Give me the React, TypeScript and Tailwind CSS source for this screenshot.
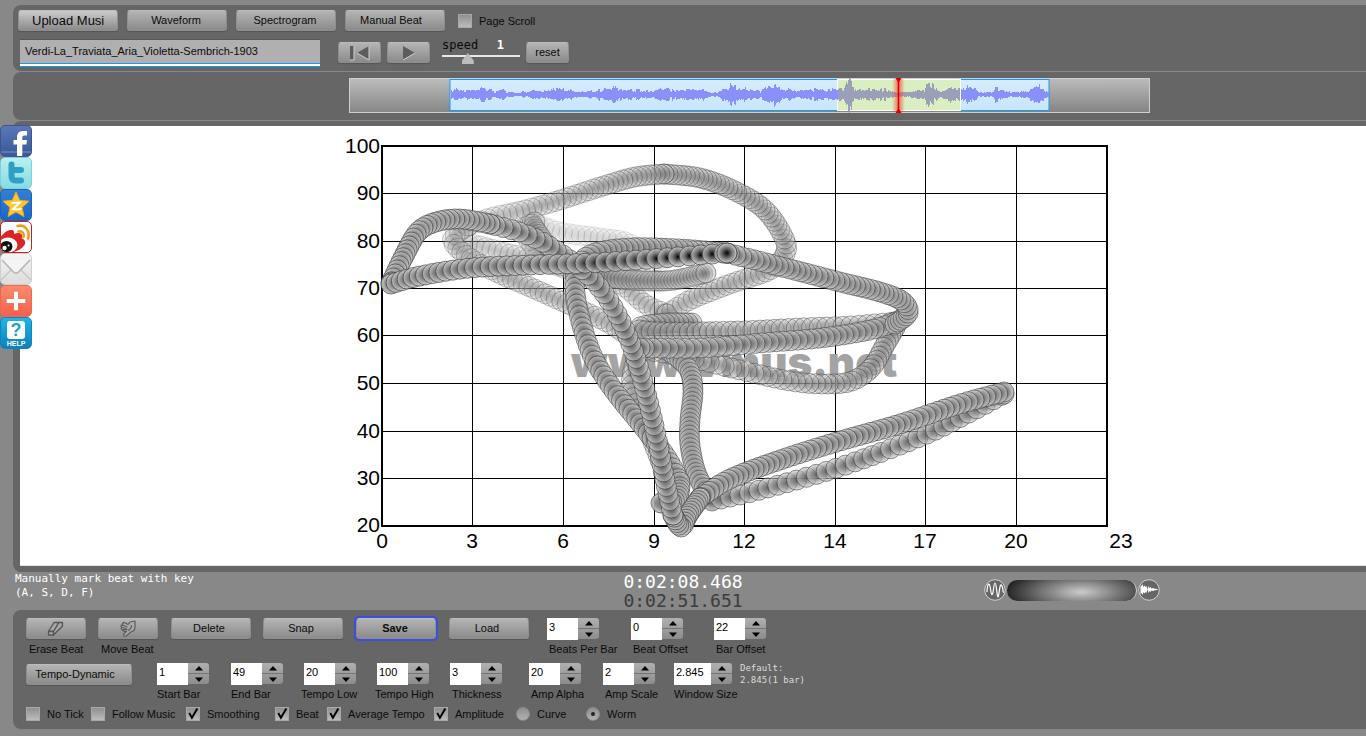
import React from "react";
import { Plus } from "lucide-react";

type Pt = [number, number];
type Strand = { pts: Pt[]; gap: [number, number]; alpha: [number, number]; tone: [number, number] };

/* Strands of the tempo-dynamic worm, oldest first, in chart units */
const strands: Strand[] = [
  { pts: [[532, 222], [560, 232], [600, 238], [628, 243], [660, 262]], gap: [6, 6], alpha: [0.2, 0.24], tone: [0, 0] },
  { pts: [[462, 242], [480, 246], [510, 254], [545, 262], [590, 277], [620, 284], [645, 304], [667, 314]], gap: [6, 6], alpha: [0.3, 0.5], tone: [0, 0] },
  { pts: [[667, 314], [690, 300], [730, 284], [770, 270], [785, 254], [784, 238], [765, 210], [735, 191], [700, 178], [664, 174]], gap: [6, 4], alpha: [0.5, 0.7], tone: [0, 0.3] },
  { pts: [[664, 174], [635, 177], [600, 187], [560, 200], [525, 210], [490, 218], [468, 226]], gap: [4, 7], alpha: [0.65, 0.36], tone: [0.3, 0] },
  { pts: [[468, 226], [455, 235], [454, 244], [470, 258], [500, 274], [530, 287], [570, 305], [610, 324], [640, 345]], gap: [5, 6], alpha: [0.45, 0.55], tone: [0.1, 0] },
  { pts: [[660, 281], [600, 272], [550, 262], [524, 232], [535, 222]], gap: [5, 5], alpha: [0.3, 0.4], tone: [0, 0.1] },
  { pts: [[532, 224], [540, 236], [555, 254], [580, 270], [610, 278], [665, 281], [706, 273]], gap: [3, 3], alpha: [0.5, 0.5], tone: [0.3, 0.3] },
  { pts: [[692, 323], [665, 323], [643, 326], [640, 330], [670, 332], [740, 331], [800, 328], [850, 326], [895, 322]], gap: [4, 8], alpha: [0.8, 0.7], tone: [0.2, 0] },
  { pts: [[895, 328], [885, 345], [872, 367], [852, 381], [825, 384], [790, 381], [740, 370], [690, 358], [640, 349]], gap: [4, 8], alpha: [0.8, 0.65], tone: [0.1, 0.15] },
  { pts: [[640, 349], [632, 375], [634, 398], [648, 430], [660, 460]], gap: [6, 6], alpha: [0.6, 0.7], tone: [0.1, 0.2] },
  { pts: [[670, 352], [688, 368], [693, 390], [690, 420], [690, 445], [697, 475], [712, 500]], gap: [4, 4], alpha: [0.8, 0.8], tone: [0, 0] },
  { pts: [[712, 501], [760, 490], [840, 467], [920, 437], [965, 415], [1004, 394]], gap: [9, 9], alpha: [0.85, 0.9], tone: [0.3, 0.4] },
  { pts: [[900, 320], [870, 330], [820, 338], [760, 343], [700, 348], [640, 348]], gap: [5, 8], alpha: [0.85, 0.85], tone: [0.2, 0.4] },
  { pts: [[895, 324], [908, 313], [902, 301], [880, 292], [840, 282], [790, 269], [727, 253]], gap: [3, 6], alpha: [0.85, 0.9], tone: [0, 0.4] },
  { pts: [[727, 253], [680, 249], [630, 248], [592, 254], [577, 270], [576, 300], [590, 350], [610, 385], [640, 423], [665, 455], [680, 482]], gap: [5, 6], alpha: [0.85, 0.9], tone: [0.1, 0.2] },
  { pts: [[680, 487], [676, 500], [661, 503]], gap: [3, 3], alpha: [0.8, 0.9], tone: [0, 0] },
  { pts: [[1004, 392], [960, 404], [900, 424], [840, 441], [780, 460], [730, 479], [700, 498]], gap: [6, 5], alpha: [0.95, 0.95], tone: [0.3, 0.2] },
  { pts: [[700, 498], [688, 515], [681, 527], [673, 515]], gap: [3, 3], alpha: [0.95, 0.95], tone: [0, 0] },
  { pts: [[673, 515], [665, 480], [655, 430], [641, 375], [625, 330], [600, 288], [567, 258], [530, 236], [490, 224]], gap: [7, 8], alpha: [0.95, 0.95], tone: [0.5, 0.7] },
  { pts: [[490, 224], [460, 219], [436, 222], [418, 232], [404, 256], [391, 283]], gap: [5, 4], alpha: [0.95, 0.95], tone: [0.3, 0] },
  { pts: [[391, 284], [420, 276], [470, 268], [530, 265], [590, 263], [650, 259], [700, 255], [727, 253]], gap: [5, 12], alpha: [1, 1], tone: [0.1, 1.2] },
];

const spline = (a: number, b: number, c: number, d: number, t: number) =>
  0.5 * (2 * b + (c - a) * t + (2 * a - 5 * b + 4 * c - d) * t * t + (3 * b - a - 3 * c + d) * t * t * t);

type Bead = { x: number; y: number; alpha: number; tone: number };

function beadsOf(s: Strand): Bead[] {
  const dense: Pt[] = [];
  for (let i = 0; i < s.pts.length - 1; i++) {
    const p0 = s.pts[Math.max(0, i - 1)];
    const p1 = s.pts[i];
    const p2 = s.pts[i + 1];
    const p3 = s.pts[Math.min(s.pts.length - 1, i + 2)];
    for (let k = 0; k < 60; k++) {
      const t = k / 60;
      dense.push([spline(p0[0], p1[0], p2[0], p3[0], t), spline(p0[1], p1[1], p2[1], p3[1], t)]);
    }
  }
  dense.push(s.pts[s.pts.length - 1]);
  const out: Bead[] = [];
  let run = 1000;
  dense.forEach((p, i) => {
    if (i > 0) run += Math.hypot(p[0] - dense[i - 1][0], p[1] - dense[i - 1][1]);
    const f = i / (dense.length - 1);
    const mix = (r: [number, number]) => r[0] + (r[1] - r[0]) * f;
    if (run >= mix(s.gap) || i === dense.length - 1) {
      run = 0;
      out.push({ x: p[0], y: p[1], alpha: mix(s.alpha), tone: Math.min(5, Math.round(mix(s.tone) * 5)) });
    }
  });
  return out;
}

const beads = strands.flatMap(beadsOf);
const cores = ["#787878", "#646464", "#505050", "#3c3c3c", "#222222", "#000000"];

function Chart() {
  const xs = [382, 472, 563, 654, 744, 835, 925, 1016, 1107];
  const xl = ["0", "3", "6", "9", "12", "14", "17", "20", "23"];
  const ys = [146, 193, 241, 288, 335, 383, 431, 478, 525];
  return (
    <svg width="800" height="439" viewBox="340 126 800 439" className="block" role="img" aria-label="Tempo-dynamic worm">
      <defs>
        {cores.map((c, i) => (
          <radialGradient key={c} id={"bead" + i}>
            <stop offset="0" stopColor={c} />
            <stop offset="0.5" stopColor={i > 3 ? "#6c6c6c" : "#848484"} stopOpacity="0.85" />
            <stop offset="1" stopColor="#d2d2d2" stopOpacity="0.7" />
          </radialGradient>
        ))}
      </defs>
      <g stroke="#000" strokeWidth="1" shapeRendering="crispEdges">
        {xs.slice(1, 8).map((x) => (
          <line key={x} x1={x + 0.5} x2={x + 0.5} y1="146" y2="526" />
        ))}
        {ys.slice(1, 8).map((y) => (
          <line key={y} x1="382" x2="1107" y1={y + 0.5} y2={y + 0.5} />
        ))}
        <rect x="382" y="146" width="725" height="380" fill="none" strokeWidth="2" />
      </g>
      <text x="571" y="377" fontSize="42" fill="#a3a3a3" className="font-['Inter'] font-black">
        www.vmus.net
      </text>
      <g fontSize="21" fill="#000" className="font-['Liberation_Sans']">
        {ys.map((y, i) => (
          <text key={y} x="380" y={y + 7} textAnchor="end">
            {100 - i * 10}
          </text>
        ))}
        {xs.map((x, i) => (
          <text key={x} x={i === 8 ? 1121 : x} y="548" textAnchor="middle">
            {xl[i]}
          </text>
        ))}
      </g>
      {beads.map((b, i) => (
        <circle
          key={i}
          cx={b.x}
          cy={b.y}
          r="10"
          fill={"url(#bead" + b.tone + ")"}
          fillOpacity={b.alpha * (b.alpha < 0.8 ? 0.7 : 1)}
          stroke="#3c3c3c"
          strokeOpacity={b.alpha * 0.85}
          strokeWidth="0.8"
        />
      ))}
    </svg>
  );
}

/* Loudness envelope: position and peak height */
const envelope: Pt[] = [
  [450, 6], [456, 6], [460, 4], [470, 5], [475, 4], [483, 8], [490, 6], [495, 3], [500, 6], [504, 6], [507, 2], [520, 2], [530, 4], [545, 4], [555, 7], [565, 5], [580, 3], [595, 5],
  [605, 6], [616, 9], [624, 5], [640, 5], [652, 3], [660, 6], [704, 6], [708, 2], [717, 2], [728, 10], [739, 9], [747, 5], [760, 4], [767, 7], [771, 12], [777, 8], [783, 6], [800, 4],
  [812, 6], [836, 5], [840, 8], [843, 6], [846, 16], [851, 15], [854, 7], [860, 7], [875, 6], [890, 5], [893, 2], [905, 2], [918, 4], [924, 3], [926, 12], [933, 9], [938, 5], [941, 3],
  [943, 7], [958, 7], [962, 5], [964, 8], [968, 13], [974, 7], [979, 2], [993, 2], [995, 9], [1003, 5], [1006, 3], [1020, 2], [1030, 6], [1039, 9], [1045, 4], [1049, 2],
];

function wave(from: number, to: number) {
  let d = "";
  for (let x = from; x < to; x++) {
    const k = Math.max(1, envelope.findIndex((p) => p[0] >= x));
    const [x0, a0] = envelope[k - 1];
    const [x1, a1] = envelope[k];
    const amp = a0 + ((a1 - a0) * (x - x0)) / (x1 - x0);
    const step = Math.floor(x / 2);
    const n0 = Math.abs(Math.sin(step * 12.9898) * 43758.5453) % 1;
    const n1 = Math.abs(Math.sin(x * 78.233) * 12543.123) % 1;
    const n2 = Math.abs(Math.sin(x * 39.425) * 21543.123) % 1;
    const up = Math.round(amp * (0.3 + 0.6 * n0 + 0.3 * n1));
    const down = Math.round(amp * (0.3 + 0.6 * n0 + 0.3 * n2));
    d += `M${x + 0.5} ${94 - up}V${95 + down}`;
  }
  return d;
}

function Overview() {
  return (
    <svg width="801" height="35" viewBox="349 78 801 35" className="block" role="img" aria-label="Waveform overview">
      <defs>
        <linearGradient id="track" x1="0" y1="0" x2="0.04" y2="1">
          <stop offset="0" stopColor="#bdbdbd" />
          <stop offset="1" stopColor="#868686" />
        </linearGradient>
        <linearGradient id="sky" x1="0" y1="0" x2="0" y2="1">
          <stop offset="0" stopColor="#d6edfd" />
          <stop offset="1" stopColor="#c6e6fd" />
        </linearGradient>
        <linearGradient id="glow">
          <stop offset="0" stopColor="#ff4030" stopOpacity="0" />
          <stop offset="0.5" stopColor="#ff3020" stopOpacity="0.7" />
          <stop offset="1" stopColor="#ff4030" stopOpacity="0" />
        </linearGradient>
      </defs>
      <rect x="349.5" y="78.5" width="800" height="34" fill="url(#track)" stroke="#cfcfcf" />
      <rect x="450" y="79.5" width="599" height="31" fill="url(#sky)" stroke="#1a9af0" />
      <rect x="837.5" y="79.5" width="123" height="31" fill="#d9efc2" stroke="#fff" />
      <path d={wave(451, 838) + wave(961, 1049)} stroke="#8890fa" />
      <path d={wave(838, 960)} stroke="#9c9fb8" />
      <rect x="892" y="79" width="13" height="33" fill="url(#glow)" />
      <path d="M898.5 78v35" stroke="#d00000" strokeWidth="1.4" />
      <path d="M895.5 78h6l-3 5zM895.5 113h6l-3-5z" fill="#e00000" />
    </svg>
  );
}

const face =
  "rounded-[3px] border border-[#8f8f8f] border-t-[#bcbcbc] bg-linear-to-b from-[#b4b4b4] to-[#8b8b8b] text-[#0b0b0b] shadow-[0_1px_1px_#555]";

function Button({ className, children, label }: { className: string; children: React.ReactNode; label?: string }) {
  return (
    <button type="button" aria-label={label} className={"flex h-[21px] shrink-0 items-center justify-center " + face + " " + className}>
      {children}
    </button>
  );
}

function Stepper({ id, label, value, wide, shift = "pl-0" }: { id: string; label: string; value: string; wide?: boolean; shift?: string }) {
  return (
    <div className="flex flex-col">
      <div className="flex h-[22px]">
        <input
          id={id}
          defaultValue={value}
          className={"h-[22px] bg-white pb-1 pl-0.5 text-[11px] text-black outline-none " + (wide ? "w-[37px]" : "w-[31px]")}
        />
        <div className="flex h-[21px] w-[21px] flex-col overflow-hidden rounded-r-[3px] bg-linear-to-b from-[#b0b0b0] to-[#8c8c8c]">
          <button type="button" aria-label={label + " up"} className="flex flex-1 items-center justify-center border-b border-[#747474]">
            <svg width="8" height="5" viewBox="0 0 8 5"><path d="M4 0L8 4.5H0z" fill="#000" /></svg>
          </button>
          <button type="button" aria-label={label + " down"} className="flex flex-1 items-center justify-center">
            <svg width="8" height="5" viewBox="0 0 8 5"><path d="M4 5L8 .5H0z" fill="#000" /></svg>
          </button>
        </div>
      </div>
      <label htmlFor={id} className={"mt-0.5 text-[11px] leading-[14px] whitespace-nowrap " + shift}>
        {label}
      </label>
    </div>
  );
}

function Check({ id, label, on }: { id: string; label: string; on?: boolean }) {
  return (
    <div className="flex h-[14px] items-center gap-[7px]">
      <span className="relative flex size-[14px] shrink-0">
        <input
          id={id}
          type="checkbox"
          defaultChecked={on}
          className="peer size-[14px] appearance-none border border-[#a8a8a8] bg-linear-to-b from-[#8f8f8f] to-[#bdbdbd]"
        />
        <svg viewBox="0 0 13 13" className="pointer-events-none absolute inset-0 hidden size-[14px] peer-checked:block">
          <path d="M3 5.500l2.500 4.500L10.500 1.500" fill="none" stroke="#000" strokeWidth="1.800" />
        </svg>
      </span>
      <label htmlFor={id} className="text-[11px] leading-[14px] whitespace-nowrap">{label}</label>
    </div>
  );
}

function Radio({ id, label, on }: { id: string; label: string; on?: boolean }) {
  return (
    <div className="flex h-[14px] items-center gap-[7px]">
      <span className="relative flex size-[14px] shrink-0">
        <input
          id={id}
          name="style"
          type="radio"
          defaultChecked={on}
          className="peer size-[14px] appearance-none rounded-full border border-[#8c8c8c] bg-linear-to-b from-[#8f8f8f] to-[#b0b0b0]"
        />
        <span className="pointer-events-none absolute top-[5px] left-[5px] hidden size-1 rounded-full bg-[#222] peer-checked:block" />
      </span>
      <label htmlFor={id} className="text-[11px] leading-[14px] whitespace-nowrap">{label}</label>
    </div>
  );
}

function Share({ label, className, children }: { label: string; className: string; children: React.ReactNode }) {
  return (
    <a href="#" aria-label={label} className={"flex size-8 items-center justify-center overflow-hidden rounded-[5px] border " + className}>
      {children}
    </a>
  );
}

function ShareBar() {
  return (
    <nav aria-label="Share" className="absolute -top-px left-[-13px] z-10 flex flex-col">
      <Share label="Facebook" className="border-[#3c5590] bg-linear-to-b from-[#5a78b8] to-[#3b5796]">
        <svg viewBox="0 0 32 32" className="size-8 shrink-0">
          <path d="M1 27h30" stroke="#7c94c6" />
          <path d="M17 32V19.500h-3.500v-4.500H17v-2.500C17 8 19.300 6 23.500 6H27v4.500h-2.500c-1.700 0-2.200.7-2.200 2.300V15H27l-.6 4.500h-4.100V32z" fill="#fff" />
        </svg>
      </Share>
      <Share label="Twitter" className="border-[#7fd0d8] bg-linear-to-b from-[#b6f0f0] to-[#86dce2]">
        <svg viewBox="0 0 32 32" className="size-8 shrink-0">
          <path d="M11.500 7.500v11.500c0 3 1.500 4.500 4.500 4.500H21M11.500 13h9.500" fill="none" stroke="#2f9fc6" strokeWidth="6" strokeLinecap="round" strokeLinejoin="round" />
        </svg>
      </Share>
      <Share label="Qzone" className="border-[#1c62bc] bg-linear-to-b from-[#3180d4] to-[#1c66c4]">
        <svg viewBox="0 0 32 32" className="size-8 shrink-0">
          <path d="M16 3l3.700 8.300 9.300.9-7 6.200 2 9.200-8-4.700-8 4.700 2-9.200-7-6.200 9.300-.9z" fill="#fdc830" stroke="#f3a81c" />
          <path d="M11.500 14l8.500-.5-7 6.500c3.500.6 6.500.5 8.500-.6" fill="none" stroke="#fff" strokeWidth="1.800" />
        </svg>
      </Share>
      <Share label="Weibo" className="border-[#c8201c] bg-white">
        <svg viewBox="0 0 32 32" className="size-8 shrink-0">
          <path d="M0 17c3-5 8-8.500 12-8 2 .3 2.500 2 2 4 3-1.400 7-1.500 8 1 .4 1.200 0 2.300-.3 3.200C25 18.500 26 21 24.500 24 22 28 16 31.500 9 31.500H0z" fill="#dc2424" />
          <ellipse cx="8" cy="24" rx="9.500" ry="7.500" fill="#fff" />
          <ellipse cx="6.500" cy="25.500" rx="6" ry="5.500" fill="#111" />
          <circle cx="4.500" cy="27" r="2.200" fill="#fff" />
          <circle cx="8.500" cy="24.500" r="1" fill="#fff" />
          <path d="M17.500 5c7-2 13 4.500 10.500 12.500M18.500 10.500c3.500-.8 6 2 5 5.500" fill="none" stroke="#f39c1c" strokeWidth="2.600" strokeLinecap="round" />
        </svg>
      </Share>
      <Share label="Email" className="border-[#cfcfcf] bg-linear-to-b from-[#f6f6f6] to-[#dcdcdc]">
        <svg viewBox="0 0 32 32" className="size-8 shrink-0">
          <path d="M1 27l10-10M31 27L21 17" stroke="#c2c2c2" strokeWidth="1.200" />
          <path d="M2 7l11.500 12c1.800 1.800 3.200 1.800 5 0L30 7" fill="#f4f4f4" stroke="#b4b4b4" strokeWidth="1.600" />
        </svg>
      </Share>
      <Share label="More" className="border-[#ea6a52] bg-linear-to-b from-[#fb8a6c] to-[#f4604a]">
        <Plus className="size-8 shrink-0 text-white" strokeWidth={3} strokeLinecap="butt" />
      </Share>
      <Share label="Help" className="flex-col border-[#0f86b8] bg-linear-to-b from-[#22b4e4] to-[#0b82ba]">
        <span className="mt-0.5 flex h-[18px] w-[18px] items-center justify-center rounded-[3px] bg-white text-[18px] leading-none font-bold text-[#18a4c8]">?</span>
        <span className="mt-px text-[7px] leading-[8px] font-bold text-white">HELP</span>
      </Share>
    </nav>
  );
}

export default function App() {
  return (
    <div className="min-h-screen bg-[#888] pt-[5px] pb-[7px] pl-[13px] font-['Liberation_Sans',Arial,sans-serif] text-[11px] text-[#0b0b0b]">
      <header className="h-[66px] rounded-l-[8px] bg-[#666] pt-[5px] pl-[5px]">
        <div className="flex items-center gap-[9px]">
          <button type="button" className={"h-[21px] w-[100px] pl-[13px] text-left " + face + " from-[#cccccc]"}>
            <span className="block w-[72px] overflow-hidden text-[13px] leading-[19px] whitespace-nowrap">Upload Music</span>
          </button>
          <Button className="w-[100px] pr-0.5">Waveform</Button>
          <Button className="w-[100px] pr-0.5">Spectrogram</Button>
          <Button className="w-[100px] pr-2">Manual Beat</Button>
          <div className="ml-1">
            <Check id="scroll" label="Page Scroll" />
          </div>
        </div>
        <div className="mt-2 flex h-7 items-start pl-0.5">
          <input
            aria-label="Track name"
            defaultValue="Verdi-La_Traviata_Aria_Violetta-Sembrich-1903"
            className="h-7 w-[300px] border-t border-b border-t-[#555] border-b-[#1a9af0] bg-[#b0b0b0] pb-[5px] pl-[5px] text-[11px] shadow-[inset_0_-2px_#fff,inset_0_-3px_#1a9af0] outline-none"
          />
          <div className="flex pt-[3px] pl-[18px]">
            <Button className="mr-1.5 w-[43px]" label="Back to start">
              <svg width="22" height="16" viewBox="0 0 22 16">
                <path d="M1 1h4v14H1z" fill="#5c5c5c" /><path d="M20 1v14L8 8z" fill="#5c5c5c" />
                <path d="M20 1v14L8 8M5 1v14H1" fill="none" stroke="#cfcfcf" strokeWidth="1" />
              </svg>
            </Button>
            <Button className="w-[43px]" label="Play">
              <svg width="14" height="16" viewBox="0 0 14 16">
                <path d="M1 1v14l12-7z" fill="#5c5c5c" /><path d="M1 15l12-7" stroke="#cfcfcf" strokeWidth="1" />
              </svg>
            </Button>
          </div>
          <div className="ml-3 w-[78px]">
            <div className="flex justify-between pr-4 font-['DejaVu_Sans_Mono',monospace] text-[12px] leading-[13px]">
              <label htmlFor="speed">speed</label>
              <span className="font-bold text-white">1</span>
            </div>
            <input
              id="speed"
              type="range"
              min="0"
              max="3"
              step="0.1"
              defaultValue="0.9"
              className="block h-[13px] w-full appearance-none bg-[linear-gradient(#e8e8e8,#e8e8e8)] bg-[length:100%_2px] bg-[position:0_3px] bg-no-repeat [&::-webkit-slider-thumb]:h-[11px] [&::-webkit-slider-thumb]:w-[12px] [&::-webkit-slider-thumb]:appearance-none [&::-webkit-slider-thumb]:bg-[#bcbcbc] [&::-webkit-slider-thumb]:[clip-path:polygon(50%_0,100%_70%,100%_100%,0_100%,0_70%)]"
            />
          </div>
          <div className="pt-[3px] pl-1.5">
            <Button className="w-[43px]">reset</Button>
          </div>
        </div>
      </header>

      <section className="mt-px h-[48px] rounded-l-[8px] bg-[#666] pt-1.5 pl-[336px]">
        <Overview />
      </section>

      <main className="relative mt-px rounded-l-[8px] bg-[#666] pt-[5px] pb-1.5 pl-[7px]">
        <div className="border-b border-[#dfe3df] bg-white pl-[320px]">
          <Chart />
        </div>
        <div className="absolute top-[5px] left-0">
          <ShareBar />
        </div>
      </main>

      <section className="-ml-[13px] grid h-[38px] grid-cols-[1fr_auto_1fr] font-['DejaVu_Sans_Mono',monospace]">
        <p className="pl-[15px] text-[11px] leading-[14px] text-white">
          Manually mark beat with key
          <br />
          (A, S, D, F)
        </p>
        <div className="text-[18px] leading-[19px] whitespace-nowrap">
          <div className="text-white">0:02:08.468</div>
          <div className="text-[#3c3c3c]">0:02:51.651</div>
        </div>
        <div className="flex items-center gap-px pb-0.5 pl-[241px]">
          <svg width="22" height="22" viewBox="0 0 22 22">
            <circle cx="11" cy="11" r="10.300" fill="#666" stroke="#cfcfcf" />
            <path d="M3 13C3.500 3 5.500 3 6.500 10s2 8 3 0 2-8 3 0 1.500 11 2.500 4 1.500-10 3-7 .5 7 2 6" fill="none" stroke="#fff" strokeWidth="1.200" />
          </svg>
          <div role="slider" aria-label="Volume" aria-valuenow={60} className="h-[21px] w-[130px] rounded-full border-r border-[#cfcfcf] bg-[radial-gradient(ellipse_76px_24px_at_74px_12px,#cccccc,#777_50%,#222)]" />
          <svg width="22" height="22" viewBox="0 0 22 22">
            <circle cx="11" cy="11" r="10.300" fill="#666" stroke="#cfcfcf" />
            <path d="M2.500 7v8l1-1 1 2 1-3 1 1.500 1-1.500 1 1 1-4 1 4 1-2 1 1 1-1.500 2 .5 1-.8 3-.2v-1l-3-.2-1-.8-2 .5-1-1.500-1 1-1-2-1 4-1-4-1 1-1-1.500-1 1.500-1-3-1 2z" fill="#fff" />
          </svg>
        </div>
      </section>

      <footer className="h-[119px] rounded-l-[8px] bg-[#666] pt-2 pl-[13px]">
        <div className="grid h-[45px] grid-cols-[72px_73px_92px_92px_94px_98px_84px_83px_auto] items-start">
          <div>
            <Button className="w-[60px]" label="Erase Beat">
              <svg width="18" height="16" viewBox="0 0 18 16" fill="#a8a8a8" stroke="#555" strokeWidth="1.300" strokeLinejoin="round">
                <path d="M1.500 10.500L7 1.500h5l-5.500 9z" /><path d="M1.500 10.500V14h5v-3.500z" /><path d="M6.500 10.500L12 1.500l3.500 0V5l-9 9z" />
              </svg>
            </Button>
            <div className="mt-[3px] pl-[3px] leading-[14px]">Erase Beat</div>
          </div>
          <div>
            <Button className="w-[60px]" label="Move Beat">
              <svg width="18" height="17" viewBox="0 0 18 17" fill="#a8a8a8" stroke="#5c5c5c" strokeWidth="1.200" strokeLinejoin="round" strokeLinecap="round">
                <path d="M16 1v6c0 3-2 4.500-4 5l-5 4c-1.500 1-3-.5-2-2l2.500-3c-2 .8-4 .3-3.200-1.300C2.500 10 1.500 8.500 3 7.500 1.300 6.500 2 4.500 3.500 5 3 3 5 2 6.500 3L9 4.500 11 2z" />
                <path d="M3 7.500l4 1M4.300 9.700L8 9.500M3.500 5L8 7M12.500 5.500c0 3-1.500 4-3 5" />
              </svg>
            </Button>
            <div className="mt-[3px] pl-[3px] leading-[14px]">Move Beat</div>
          </div>
          <Button className="w-[80px] pr-1">Delete</Button>
          <Button className="w-[80px] pr-1">Snap</Button>
          <Button className="ml-px w-[80px] pr-0.5 font-bold outline-2 outline-[#3a4fe0]">Save</Button>
          <Button className="w-[80px] pr-1">Load</Button>
          <Stepper id="bpb" label="Beats Per Bar" value="3" shift="pl-0.5" />
          <Stepper id="beatoff" label="Beat Offset" value="0" shift="pl-0.5" />
          <Stepper id="baroff" label="Bar Offset" value="22" shift="pl-0.5" />
        </div>
        <div className="grid h-11 grid-cols-[131px_74px_73px_73px_73px_79px_74px_71px_66px_auto] items-start">
          <Button className="mt-px w-[106px] pr-2">Tempo-Dynamic</Button>
          <Stepper id="sbar" label="Start Bar" value="1" />
          <Stepper id="ebar" label="End Bar" value="49" />
          <Stepper id="tlow" label="Tempo Low" value="20" shift="-ml-[3px]" />
          <Stepper id="thigh" label="Tempo High" value="100" shift="-ml-0.5" />
          <Stepper id="thick" label="Thickness" value="3" shift="pl-0.5" />
          <Stepper id="aalpha" label="Amp Alpha" value="20" shift="pl-0.5" />
          <Stepper id="ascale" label="Amp Scale" value="2" shift="pl-0.5" />
          <Stepper id="wsize" label="Window Size" value="2.845" wide />
          <p className="-mt-px font-['DejaVu_Sans_Mono',monospace] text-[9px] leading-[12px] whitespace-nowrap text-[#dcdcdc]">
            Default:
            <br />
            2.845(1 bar)
          </p>
        </div>
        <div className="grid grid-cols-[65px_95px_89px_52px_107px_82px_70px_auto]">
          <Check id="notick" label="No Tick" />
          <Check id="follow" label="Follow Music" />
          <Check id="smooth" label="Smoothing" on />
          <Check id="beat" label="Beat" on />
          <Check id="avg" label="Average Tempo" on />
          <Check id="ampl" label="Amplitude" on />
          <Radio id="curve" label="Curve" />
          <Radio id="worm" label="Worm" on />
        </div>
      </footer>
    </div>
  );
}
